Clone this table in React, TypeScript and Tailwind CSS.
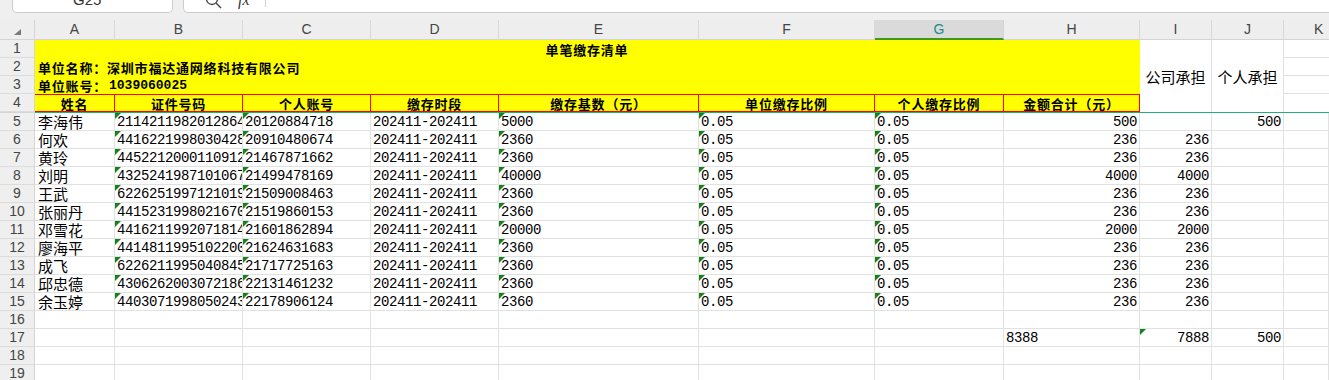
import React from "react";

const W = [
  "w-[80px]",
  "w-[128px]",
  "w-[128px]",
  "w-[128px]",
  "w-[200px]",
  "w-[176px]",
  "w-[129px]",
  "w-[136px]",
  "w-[72px]",
  "w-[72px]",
];
const LETTERS = ["A", "B", "C", "D", "E", "F", "G", "H", "I", "J"];

const MONO = "font-['Liberation_Mono',monospace] text-[14px] tracking-[-0.4px] leading-[16px]";
const CJK = "font-['Noto_Sans_CJK_SC',sans-serif] text-[15px] leading-[15px]";
const UI = "font-['Liberation_Sans','Noto_Sans',sans-serif]";

type R = string[];
const data: R[] = [
  ["李海伟", "2114211982012864", "20120884718", "202411-202411", "5000", "0.05", "0.05", "500", "", "500"],
  ["何欢", "4416221998030428", "20910480674", "202411-202411", "2360", "0.05", "0.05", "236", "236", ""],
  ["黄玲", "4452212000110912", "21467871662", "202411-202411", "2360", "0.05", "0.05", "236", "236", ""],
  ["刘明", "4325241987101067", "21499478169", "202411-202411", "40000", "0.05", "0.05", "4000", "4000", ""],
  ["王武", "6226251997121019", "21509008463", "202411-202411", "2360", "0.05", "0.05", "236", "236", ""],
  ["张丽丹", "4415231998021670", "21519860153", "202411-202411", "2360", "0.05", "0.05", "236", "236", ""],
  ["邓雪花", "4416211992071814", "21601862894", "202411-202411", "20000", "0.05", "0.05", "2000", "2000", ""],
  ["廖海平", "4414811995102200", "21624631683", "202411-202411", "2360", "0.05", "0.05", "236", "236", ""],
  ["成飞", "6226211995040845", "21717725163", "202411-202411", "2360", "0.05", "0.05", "236", "236", ""],
  ["邱忠德", "4306262003072186", "22131461232", "202411-202411", "2360", "0.05", "0.05", "236", "236", ""],
  ["余玉婷", "4403071998050243", "22178906124", "202411-202411", "2360", "0.05", "0.05", "236", "236", ""],
];

function Tri() {
  return (
    <span className="absolute left-0 top-0 w-0 h-0 border-t-[6px] border-t-[#17821c] border-r-[6px] border-r-transparent" />
  );
}

function RowHead({ n, h = "h-[18px]" }: { n: number; h?: string }) {
  return (
    <div
      className={`w-[35px] shrink-0 ${h} bg-[#efefef] border-r border-b border-r-[#d4d4d4] border-b-[#dcdcdc] flex items-center justify-center text-[14px] text-[#454545] ${UI}`}
    >
      {n}
    </div>
  );
}

type CellProps = {
  w: string;
  children?: React.ReactNode;
  right?: boolean;
  tri?: boolean;
  cjk?: boolean;
};

function Cell({ w, children, right, tri, cjk }: CellProps) {
  return (
    <div
      className={`relative ${w} shrink-0 h-[18px] border-r border-b border-[#e1e1e1] overflow-hidden whitespace-nowrap flex items-center ${
        right ? "justify-end pr-[2px]" : cjk ? "pl-[3px]" : "pl-[2px]"
      } ${cjk ? CJK : MONO} text-black`}
    >
      {tri && <Tri />}
      <span className={cjk ? "pb-[1px]" : "pt-[1px]"}>{children}</span>
    </div>
  );
}

function DataRow({ n, r }: { n: number; r: R }) {
  return (
    <div className="flex h-[18px]">
      <RowHead n={n} />
      <Cell w={W[0]} cjk>{r[0]}</Cell>
      <Cell w={W[1]} tri>{r[1]}</Cell>
      <Cell w={W[2]} tri>{r[2]}</Cell>
      <Cell w={W[3]}>{r[3]}</Cell>
      <Cell w={W[4]} tri>{r[4]}</Cell>
      <Cell w={W[5]} tri>{r[5]}</Cell>
      <Cell w={W[6]} tri>{r[6]}</Cell>
      <Cell w={W[7]} right>{r[7]}</Cell>
      <Cell w={W[8]} right>{r[8]}</Cell>
      <Cell w={W[9]} right>{r[9]}</Cell>
      <Cell w="flex-1" />
    </div>
  );
}

function EmptyRow({ n }: { n: number }) {
  return (
    <div className="flex h-[18px]">
      <RowHead n={n} />
      {W.map((w, i) => (
        <Cell key={i} w={w} />
      ))}
      <Cell w="flex-1" />
    </div>
  );
}

const HEAD4 = ["姓名", "证件号码", "个人账号", "缴存时段", "缴存基数（元）", "单位缴存比例", "个人缴存比例", "金额合计（元）"];

export default function App() {
  return (
    <div className="w-[1329px] h-[380px] overflow-hidden bg-white">
      {/* formula bar remnant */}
      <div className="h-[20px] bg-[#efefef] flex items-start">
        <div className={`ml-[12px] w-[161px] h-[13px] bg-white border border-t-0 border-[#cdcdcd] rounded-b-[5px] overflow-hidden relative ${UI}`}>
          <div className="absolute left-[60px] top-[-11px] text-[15px] text-[#333]">G25</div>
          <div className="absolute left-[148px] top-[-6px]">
            <svg width="8" height="8" viewBox="0 0 8 8">
              <path d="M1 2 L4 5 L7 2" fill="none" stroke="#666" strokeWidth="1.2" />
            </svg>
          </div>
        </div>
        <div className={`ml-[10px] flex-1 h-[13px] bg-white border border-t-0 border-r-0 border-[#cdcdcd] rounded-bl-[5px] overflow-hidden relative ${UI}`}>
          <svg className="absolute left-[21px] top-[-8px]" width="18" height="18" viewBox="0 0 18 18">
            <circle cx="7" cy="7" r="5.5" fill="none" stroke="#444" strokeWidth="1.3" />
            <path d="M11 11 L16 16" stroke="#444" strokeWidth="1.4" />
          </svg>
          <div className="absolute left-[54px] top-[-12px] text-[16px] italic text-[#333] font-['Liberation_Serif',serif]">fx</div>
          <div className="absolute left-[81px] top-0 w-px h-[7px] bg-[#cfcfcf]" />
        </div>
      </div>

      {/* column header */}
      <div className={`flex h-[20px] bg-[#eeeeee] ${UI}`}>
        <div className="w-[35px] shrink-0 h-[20px] border-r border-b border-[#d4d4d4] relative">
          <svg className="absolute left-[14px] top-[9px]" width="7" height="6" viewBox="0 0 7 6">
            <polygon points="7,0 7,6 0,6" fill="#7a7a7a" />
          </svg>
        </div>
        {W.map((w, i) =>
          LETTERS[i] === "G" ? (
            <div
              key={i}
              className={`${w} shrink-0 h-[20px] bg-[#dadada] border-r border-r-[#d4d4d4] border-b-2 border-b-[#3d9a1f] flex items-center justify-center text-[14px] text-[#1d8a86]`}
            >
              {LETTERS[i]}
            </div>
          ) : (
            <div
              key={i}
              className={`${w} shrink-0 h-[20px] border-r border-b border-r-[#d8d8d8] border-b-[#d4d4d4] flex items-center justify-center text-[14px] text-[#444]`}
            >
              {LETTERS[i]}
            </div>
          )
        )}
        <div className="flex-1 h-[20px] border-b border-[#d4d4d4] flex items-center pl-[30px] text-[14px] text-[#444]">
          K
        </div>
      </div>

      {/* rows 1-4 */}
      <div className="flex">
        <div className="flex flex-col">
          <RowHead n={1} />
          <RowHead n={2} />
          <RowHead n={3} />
          <RowHead n={4} />
        </div>
        <div className="w-[1105px] shrink-0 flex flex-col font-['Noto_Sans_CJK_SC',sans-serif] font-bold text-[13px] leading-[15px] tracking-[0.8px] text-black">
          <div className="h-[54px] bg-[#ffff00] flex flex-col">
            <div className="h-[18px] flex items-center justify-center pr-[1px]">单笔缴存清单</div>
            <div className="h-[18px] flex items-center pl-[3px]">单位名称：深圳市福达通网络科技有限公司</div>
            <div className="h-[18px] flex items-center pl-[3px]">
              单位账号：
              <span className="ml-[2px] font-['Liberation_Mono',monospace] text-[13px] tracking-[0px]">1039060025</span>
            </div>
          </div>
          <div className="h-[18px] flex bg-[#ffff00] border-t border-b border-[#ff0000]">
            {HEAD4.map((t, i) => (
              <div
                key={i}
                className={`${W[i]} shrink-0 h-full border-r border-[#ff0000] flex items-center justify-center leading-none`}
              >
                {t}
              </div>
            ))}
          </div>
        </div>
        <div className={`w-[72px] shrink-0 h-[72px] border-r border-[#e1e1e1] flex items-center justify-center ${CJK} text-black`}>
          公司承担
        </div>
        <div className={`w-[72px] shrink-0 h-[72px] border-r border-[#e1e1e1] flex items-center justify-center ${CJK} text-black`}>
          个人承担
        </div>
        <div className="flex-1 flex flex-col">
          <div className="h-[18px] border-b border-[#e1e1e1]" />
          <div className="h-[18px] border-b border-[#e1e1e1]" />
          <div className="h-[18px] border-b border-[#e1e1e1]" />
          <div className="h-[18px]" />
        </div>
      </div>
      {/* freeze line */}
      <div className="flex h-px">
        <div className="w-[35px] bg-[#d4d4d4]" />
        <div className="flex-1 bg-[#21b07d]" />
      </div>

      {data.map((r, i) => (
        <DataRow key={i} n={i + 5} r={r} />
      ))}
      <EmptyRow n={16} />
      <div className="flex h-[18px]">
        <RowHead n={17} />
        {W.slice(0, 7).map((w, i) => (
          <Cell key={i} w={w} />
        ))}
        <Cell w={W[7]}>8388</Cell>
        <Cell w={W[8]} right tri>7888</Cell>
        <Cell w={W[9]} right>500</Cell>
        <Cell w="flex-1" />
      </div>
      <EmptyRow n={18} />
      <EmptyRow n={19} />
    </div>
  );
}
